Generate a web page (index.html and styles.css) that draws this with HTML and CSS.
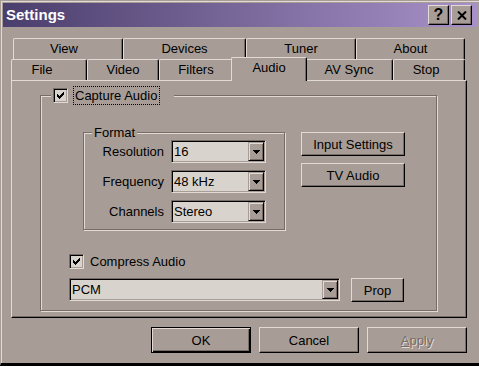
FILE: index.html
```html
<!DOCTYPE html>
<html lang="en">
<head>
<meta charset="utf-8">
<title>Settings</title>
<link rel="stylesheet" href="styles.css">
</head>
<body>
<div class="window">
  <div class="titlebar">
    <span class="title">Settings</span>
    <div class="title-buttons">
      <button class="tbtn help" type="button">?</button>
      <button class="tbtn close" type="button" aria-label="Close">
        <svg width="10" height="9" viewBox="0 0 10 9"><path d="M1 0.5 L9 8.5 M9 0.5 L1 8.5" stroke="#000" stroke-width="2" fill="none"/></svg>
      </button>
    </div>
  </div>
  <div class="client">
    <div class="tabs">
      <div class="tab-row back">
        <div class="tab t-view">View</div>
        <div class="tab t-devices">Devices</div>
        <div class="tab t-tuner">Tuner</div>
        <div class="tab t-about">About</div>
      </div>
      <div class="tab-row front">
        <div class="tab t-file">File</div>
        <div class="tab t-video">Video</div>
        <div class="tab t-filters">Filters</div>
        <div class="tab t-audio selected">Audio</div>
        <div class="tab t-avsync">AV Sync</div>
        <div class="tab t-stop">Stop</div>
      </div>
    </div>
    <div class="panel">
      <fieldset class="group capture">
        <legend class="check-legend">
          <span class="checkbox"><svg width="7" height="7" viewBox="0 0 7 7"><path d="M0 2h1v3h-1z M1 3h1v3h-1z M2 4h1v3h-1z M3 3h1v3h-1z M4 2h1v3h-1z M5 1h1v3h-1z M6 0h1v3h-1z" fill="#000"/></svg></span>
          <span class="focus">Capture Audio</span>
        </legend>
        <div class="capture-body">
          <div class="capture-top">
            <fieldset class="group format">
              <legend class="plain-legend">Format</legend>
              <div class="field-grid">
                <span class="field-label">Resolution</span>
                <div class="combo"><span class="value">16</span><span class="drop"><svg width="7" height="4" viewBox="0 0 7 4"><path d="M0 0h7v1h-7z M1 1h5v1h-5z M2 2h3v1h-3z M3 3h1v1h-1z" fill="#000"/></svg></span></div>
                <span class="field-label">Frequency</span>
                <div class="combo"><span class="value">48 kHz</span><span class="drop"><svg width="7" height="4" viewBox="0 0 7 4"><path d="M0 0h7v1h-7z M1 1h5v1h-5z M2 2h3v1h-3z M3 3h1v1h-1z" fill="#000"/></svg></span></div>
                <span class="field-label">Channels</span>
                <div class="combo"><span class="value">Stereo</span><span class="drop"><svg width="7" height="4" viewBox="0 0 7 4"><path d="M0 0h7v1h-7z M1 1h5v1h-5z M2 2h3v1h-3z M3 3h1v1h-1z" fill="#000"/></svg></span></div>
              </div>
            </fieldset>
            <div class="side-buttons">
              <button class="btn side" type="button">Input Settings</button>
              <button class="btn side" type="button">TV Audio</button>
            </div>
          </div>
          <div class="check-row">
            <span class="checkbox"><svg width="7" height="7" viewBox="0 0 7 7"><path d="M0 2h1v3h-1z M1 3h1v3h-1z M2 4h1v3h-1z M3 3h1v3h-1z M4 2h1v3h-1z M5 1h1v3h-1z M6 0h1v3h-1z" fill="#000"/></svg></span>
            <span>Compress Audio</span>
          </div>
          <div class="pcm-row">
            <div class="combo wide"><span class="value">PCM</span><span class="drop"><svg width="7" height="4" viewBox="0 0 7 4"><path d="M0 0h7v1h-7z M1 1h5v1h-5z M2 2h3v1h-3z M3 3h1v1h-1z" fill="#000"/></svg></span></div>
            <button class="btn prop" type="button">Prop</button>
          </div>
        </div>
      </fieldset>
    </div>
    <div class="dialog-buttons">
      <button class="btn dlg default" type="button">OK</button>
      <button class="btn dlg" type="button">Cancel</button>
      <button class="btn dlg" type="button" disabled><span class="accel">A</span>pply</button>
    </div>
  </div>
</div>
</body>
</html>
```

FILE: styles.css
```css
:root {
  --face: #a89d96;
  --hl: #e2dad4;
  --shadow: #786d66;
  --dark: #000;
  --field: #d9d3cd;
}

html, body {
  margin: 0;
  padding: 0;
  background: var(--face);
}

body {
  font-family: "Liberation Sans", Arial, sans-serif;
  font-size: 13px;
  color: #000;
}

.window {
  width: 479px;
  height: 366px;
  box-sizing: border-box;
  border-top: 1px solid var(--face);
  border-left: 1px solid var(--face);
  border-bottom: 3px solid #000;
  box-shadow: inset 1px 1px var(--hl);
  padding: 2px 2px 0 2px;
  display: flex;
  flex-direction: column;
  background: var(--face);
}

/* title bar */
.titlebar {
  height: 24px;
  flex: none;
  display: flex;
  align-items: center;
  padding: 0 5px 0 3px;
  background: linear-gradient(to right, #4a3e6c, #a891c8);
}

.title {
  flex: 1;
  color: #fff;
  font-weight: bold;
  font-size: 15px;
  line-height: 18px;
}

.title-buttons {
  display: flex;
  gap: 2px;
}

.tbtn {
  box-sizing: border-box;
  width: 21px;
  height: 20px;
  margin: 0;
  padding: 0;
  border: 1px solid;
  border-color: var(--hl) #000 #000 var(--hl);
  border-radius: 0;
  box-shadow: inset -1px -1px var(--shadow);
  background: var(--face);
  display: flex;
  align-items: center;
  justify-content: center;
  font-family: "Liberation Sans", Arial, sans-serif;
  font-weight: bold;
  font-size: 16px;
  line-height: 16px;
  color: #000;
}

/* client */
.client {
  flex: 1;
  display: flex;
  flex-direction: column;
  padding: 11px 10px 0 8px;
}

.tab-row {
  display: flex;
  height: 21px;
  align-items: flex-start;
}

.tab-row.back {
  padding-left: 2px;
}

.tab {
  box-sizing: border-box;
  flex: none;
  height: 21px;
  border-top: 1px solid var(--hl);
  border-left: 1px solid var(--hl);
  border-right: 1px solid #000;
  border-top-left-radius: 2px;
  border-top-right-radius: 2px;
  box-shadow: inset -1px 0 var(--shadow);
  background: var(--face);
  text-align: center;
  line-height: 20px;
  white-space: nowrap;
}

.tab.selected {
  height: 24px;
  margin: -2px -2px -1px -2px;
  position: relative;
  z-index: 1;
}

.t-view { width: 110px; padding-right: 8px; }
.t-devices { width: 123px; }
.t-tuner { width: 110px; }
.t-about { width: 109px; }
.t-file { width: 76px; padding-right: 14px; }
.t-video { width: 72px; }
.t-filters { width: 74px; }
.t-audio { width: 76px; }
.t-avsync { width: 88px; }
.t-stop { width: 72px; padding-right: 6px; }

/* panel */
.panel {
  height: 238px;
  box-sizing: border-box;
  border-top: 1px solid var(--hl);
  border-left: 1px solid var(--hl);
  border-right: 1px solid #000;
  border-bottom: 1px solid #000;
  box-shadow: inset -1px -1px var(--shadow);
  padding: 5px 0 0 28px;
}

.group {
  margin: 0;
  min-width: 0;
  border: 1px solid var(--shadow);
  box-shadow: inset 1px 1px var(--hl), 1px 1px var(--hl);
  box-sizing: border-box;
}

.capture {
  width: 397px;
  padding: 0 0 0 10px;
}

.check-legend {
  margin: 0;
  padding: 0;
  display: flex;
  align-items: center;
  height: 19px;
  background: var(--face);
}

.check-legend .checkbox {
  margin-left: 2px;
}

.focus {
  box-sizing: border-box;
  height: 19px;
  margin-left: 5px;
  margin-right: 14px;
  padding: 0 2px 0 1px;
  border: 1px dotted #000;
  line-height: 17px;
}

.capture-body {
  padding: 20px 0 8px 18px;
}

.capture-top {
  display: flex;
  align-items: flex-start;
  gap: 16px;
}

.format {
  width: 202px;
  margin-left: 14px;
  padding: 0 18px 6px 8px;
}

.plain-legend {
  margin: 0;
  padding: 0 2px;
  line-height: 15px;
  background: var(--face);
}

.field-grid {
  display: grid;
  grid-template-columns: 72px 95px;
  column-gap: 7px;
  row-gap: 7px;
  align-items: center;
}

.field-label {
  text-align: right;
  white-space: nowrap;
}

.combo {
  box-sizing: border-box;
  height: 23px;
  display: flex;
  border: 1px solid;
  border-color: var(--shadow) var(--hl) var(--hl) var(--shadow);
  box-shadow: inset 1px 1px #000, inset -1px -1px var(--face);
  padding: 1px;
  background: var(--field);
}

.combo .value {
  flex: 1;
  padding-left: 1px;
  line-height: 19px;
  white-space: nowrap;
}

.drop {
  box-sizing: border-box;
  width: 16px;
  flex: none;
  border: 1px solid;
  border-color: var(--face) #000 #000 var(--face);
  box-shadow: inset 1px 1px var(--hl), inset -1px -1px var(--shadow);
  background: var(--face);
  display: flex;
  align-items: center;
  justify-content: center;
}

.drop svg {
  display: block;
}

.side-buttons {
  margin-top: 7px;
  display: flex;
  flex-direction: column;
  gap: 7px;
}

.btn {
  box-sizing: border-box;
  margin: 0;
  padding: 0;
  font-family: "Liberation Sans", Arial, sans-serif;
  font-size: 13px;
  color: #000;
  background: var(--face);
  border: 1px solid;
  border-color: var(--hl) #000 #000 var(--hl);
  border-radius: 0;
  box-shadow: inset -1px -1px var(--shadow);
  text-align: center;
  white-space: nowrap;
}

.btn.side {
  width: 104px;
  height: 24px;
}

.checkbox {
  box-sizing: border-box;
  flex: none;
  width: 15px;
  height: 15px;
  border: 1px solid;
  border-color: var(--shadow) var(--hl) var(--hl) var(--shadow);
  box-shadow: inset 1px 1px #000, inset -1px -1px var(--face);
  background: var(--field);
  display: flex;
  align-items: center;
  justify-content: center;
}

.checkbox svg {
  display: block;
}

.check-row {
  margin-top: 24px;
  display: flex;
  align-items: center;
  gap: 6px;
  height: 15px;
  line-height: 15px;
}

.pcm-row {
  margin-top: 9px;
  display: flex;
  align-items: flex-start;
  gap: 11px;
}

.combo.wide {
  width: 271px;
}

.btn.prop {
  width: 53px;
  height: 24px;
}

.dialog-buttons {
  margin-top: 9px;
  display: flex;
  justify-content: flex-end;
  gap: 8px;
}

.btn.dlg {
  width: 100px;
  height: 26px;
}

.btn.default {
  border-color: #000;
  box-shadow: inset 1px 1px var(--hl), inset -1px -1px #000, inset -2px -2px var(--shadow);
}

.btn:disabled {
  color: var(--shadow);
  text-shadow: 1px 1px var(--hl);
}

.accel {
  text-decoration: underline;
}
```
